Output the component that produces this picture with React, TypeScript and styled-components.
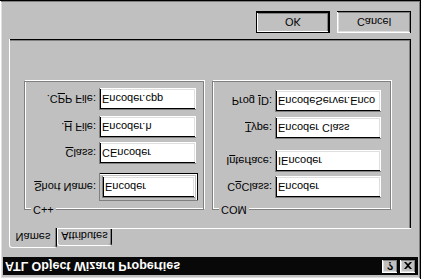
import * as React from 'react';
import styled, { createGlobalStyle } from 'styled-components';

const GlobalStyle = createGlobalStyle`
  html, body {
    margin: 0;
    padding: 0;
    background: #c0c0c0;
  }
  body {
    font-family: 'Liberation Sans', Arial, sans-serif;
    font-size: 11px;
    color: #000;
  }
`;

const raised = `
  box-shadow: inset -1px -1px 0 #000, inset 1px 1px 0 #fff,
    inset -2px -2px 0 #808080, inset 2px 2px 0 #dfdfdf;
`;

const sunken = `
  box-shadow: inset 1px 1px 0 #808080, inset -1px -1px 0 #fff,
    inset 2px 2px 0 #000, inset -2px -2px 0 #dfdfdf;
`;

type Field = { label: string; key: number; value: string; top: number };

const cppFields: Field[] = [
  { label: 'Short Name:', key: 0, value: 'Encoder', top: 8 },
  { label: 'Class:', key: 0, value: 'CEncoder', top: 9 },
  { label: '.H File:', key: 1, value: 'Encoder.h', top: 4 },
  { label: '.CPP File:', key: 2, value: 'Encoder.cpp', top: 6 },
];

const comFields: Field[] = [
  { label: 'CoClass:', key: 1, value: 'Encoder', top: 11 },
  { label: 'Interface:', key: 1, value: 'IEncoder', top: 4 },
  { label: 'Type:', key: 0, value: 'Encoder Class', top: 11 },
  { label: 'Prog ID:', key: 5, value: 'EncodeServer.Enco', top: 5 },
];

function Mnemonic({ text, index }: { text: string; index: number }) {
  return (
    <>
      {text.slice(0, index)}
      <u>{text[index]}</u>
      {text.slice(index + 1)}
    </>
  );
}

function FieldRow({
  field,
  labelWidth,
  editWidth,
  focused,
}: {
  field: Field;
  labelWidth: number;
  editWidth: number;
  focused?: boolean;
}) {
  return (
    <Row $top={field.top}>
      <Label $width={labelWidth}>
        <Mnemonic text={field.label} index={field.key} />
      </Label>
      {focused ? (
        <FocusFrame $width={editWidth + 2}>
          <Edit $width={editWidth - 4}>{field.value}</Edit>
        </FocusFrame>
      ) : (
        <Edit $width={editWidth}>{field.value}</Edit>
      )}
    </Row>
  );
}

export default function App() {
  return (
    <>
      <GlobalStyle />
      <Window>
        <TitleBar>
          <Title>ATL Object Wizard Properties</Title>
          <TitleButton>
            <HelpGlyph>?</HelpGlyph>
          </TitleButton>
          <TitleButton $gap>
            <svg width="8" height="7" viewBox="0 0 8 7">
              <path d="M0 0h2l2 2 2-2h2L5 3.5 8 7H6L4 5 2 7H0l3-3.5z" fill="#000" />
            </svg>
          </TitleButton>
        </TitleBar>

        <Body>
          <TabRow>
            <Tab $active $width={48}>
              Names
            </Tab>
            <Tab $width={55}>Attributes</Tab>
          </TabRow>

          <Panel>
            <Group $width={180}>
              <GroupLabel>C++</GroupLabel>
              {cppFields.map((f, i) => (
                <FieldRow
                  key={f.label}
                  field={f}
                  labelWidth={71}
                  editWidth={97}
                  focused={i === 0}
                />
              ))}
            </Group>
            <Group $width={179}>
              <GroupLabel>COM</GroupLabel>
              {comFields.map((f) => (
                <FieldRow key={f.label} field={f} labelWidth={59} editWidth={106} />
              ))}
            </Group>
          </Panel>

          <ButtonRow>
            <Button $default>OK</Button>
            <Button>Cancel</Button>
          </ButtonRow>
        </Body>
      </Window>
    </>
  );
}

const Window = styled.div`
  width: 421px;
  height: 279px;
  box-sizing: border-box;
  padding: 4px 3px 3px 3px;
  background: #c0c0c0;
  ${raised}
  transform: scaleY(-1);
  overflow: hidden;
`;

const TitleBar = styled.div`
  height: 18px;
  display: flex;
  align-items: center;
  padding: 0 2px 0 2px;
  background: #080808;
`;

const Title = styled.div`
  flex: 1;
  color: #fff;
  font-weight: 700;
  font-size: 12.5px;
  white-space: nowrap;
  overflow: hidden;
`;

const TitleButton = styled.div<{ $gap?: boolean }>`
  width: 16px;
  height: 14px;
  margin-left: ${(p) => (p.$gap ? '2px' : '0')};
  display: flex;
  align-items: center;
  justify-content: center;
  background: #c0c0c0;
  ${raised}
`;

const HelpGlyph = styled.span`
  font-weight: 700;
  font-size: 11px;
  line-height: 1;
`;

const Body = styled.div`
  margin: 9px 7px 0 6px;
`;

const TabRow = styled.div`
  display: flex;
  align-items: flex-end;
  height: 19px;
`;

const Tab = styled.div<{ $active?: boolean; $width: number }>`
  position: relative;
  z-index: ${(p) => (p.$active ? 1 : 0)};
  width: ${(p) => p.$width}px;
  height: ${(p) => (p.$active ? 20 : 17)}px;
  margin-bottom: ${(p) => (p.$active ? -1 : 0)}px;
  box-sizing: border-box;
  display: flex;
  align-items: center;
  justify-content: center;
  padding-top: ${(p) => (p.$active ? 0 : 1)}px;
  background: #c0c0c0;
  border-radius: 3px 3px 0 0;
  border-top: 1px solid #fff;
  border-left: 1px solid #fff;
  border-right: 1px solid #000;
  box-shadow: inset -1px 0 0 #808080;
`;

const Panel = styled.div`
  height: 190px;
  box-sizing: border-box;
  padding: 19px 0 0 15px;
  display: flex;
  gap: 8px;
  align-items: flex-start;
  box-shadow: inset 1px 1px 0 #fff, inset -1px -1px 0 #000,
    inset -2px -2px 0 #808080;
`;

const Group = styled.div<{ $width: number }>`
  position: relative;
  width: ${(p) => p.$width}px;
  height: 129px;
  box-sizing: border-box;
  border: 1px solid #808080;
  box-shadow: inset 1px 1px 0 #fff, 1px 1px 0 #fff;
  display: flex;
  flex-direction: column;
`;

const GroupLabel = styled.span`
  position: absolute;
  top: -7px;
  left: 6px;
  padding: 0 2px;
  background: #c0c0c0;
  line-height: 13px;
`;

const Row = styled.div<{ $top: number }>`
  display: flex;
  align-items: center;
  margin-top: ${(p) => p.$top}px;
`;

const Label = styled.div<{ $width: number }>`
  width: ${(p) => p.$width}px;
  text-align: right;
  white-space: nowrap;
  margin-right: 3px;
  flex-shrink: 0;
`;

const Edit = styled.div<{ $width: number }>`
  width: ${(p) => p.$width}px;
  height: 22px;
  box-sizing: border-box;
  padding: 5px 3px 0 3px;
  background: #fff;
  white-space: nowrap;
  overflow: hidden;
  line-height: 13px;
  ${sunken}
`;

const FocusFrame = styled.div<{ $width: number }>`
  width: ${(p) => p.$width}px;
  height: 28px;
  box-sizing: border-box;
  padding: 3px;
  display: flex;
  box-shadow: inset 1px 1px 0 #808080, inset -1px -1px 0 #000,
    inset -2px -2px 0 #fff;
`;

const ButtonRow = styled.div`
  display: flex;
  justify-content: flex-end;
  gap: 7px;
  margin-top: 6px;
`;

const Button = styled.div<{ $default?: boolean }>`
  width: 74px;
  height: 22px;
  box-sizing: border-box;
  display: flex;
  align-items: center;
  justify-content: center;
  background: #c0c0c0;
  ${(p) =>
    p.$default
      ? `border: 1px solid #000;
         box-shadow: inset -1px -1px 0 #000, inset 1px 1px 0 #fff,
           inset -2px -2px 0 #808080;`
      : raised}
`;
